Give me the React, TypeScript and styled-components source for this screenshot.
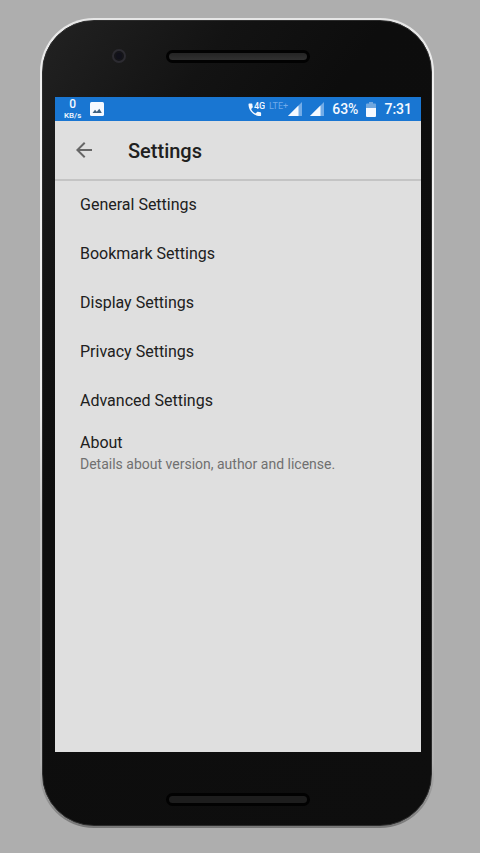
import React from "react";
import styled, { createGlobalStyle } from "styled-components";

const GlobalStyle = createGlobalStyle`
  *, *::before, *::after { box-sizing: border-box; }
  body {
    margin: 0;
    background: #aeaeae;
    font-family: Roboto, "Liberation Sans", sans-serif;
  }
`;

const Page = styled.div`
  min-height: 100vh;
  display: flex;
  padding: 18px 46px 25px 40px;
  background: #aeaeae;
`;

const PhoneEdge = styled.div`
  flex: 1;
  display: flex;
  padding: 2px;
  border-radius: 54px;
  background: linear-gradient(180deg, #e6e6e6 0%, #f2f2f2 12%, #ececec 48%, #c4c4c4 62%, #b4b4b4 92%, #777 100%);
`;

const Phone = styled.div`
  flex: 1;
  display: flex;
  flex-direction: column;
  padding: 0 11px;
  border: 1px solid #2c2c2c;
  border-radius: 52px;
  background: linear-gradient(125deg, #222 0%, #131313 20%, #0d0d0d 36%, #0e0e0e 100%);
`;

const Bezel = styled.div`
  display: grid;
  grid-template-columns: 1fr 144px 1fr;
  align-items: center;
  padding-left: 1px;
`;

const TopBezel = styled(Bezel)`
  height: 76px;
  padding-bottom: 6px;
`;

const BottomBezel = styled(Bezel)`
  height: 73px;
  padding-top: 21px;
`;

const Camera = styled.svg`
  display: block;
  margin-left: 56px;
`;

const Speaker = styled.div<{ $tone: string }>`
  grid-column: 2;
  height: 13px;
  border: 3px solid #020202;
  border-radius: 7px;
  background: ${(p) => p.$tone};
`;

const Screen = styled.main`
  flex: 1;
  margin: 0 -1px 0 1px;
  background: #dfdfdf;
  color: #202020;
`;

const StatusBar = styled.div`
  height: 24px;
  display: flex;
  align-items: center;
  justify-content: space-between;
  padding: 0 9px;
  background: #1976d2;
  color: #f5f9ff;
`;

const StatusGroup = styled.div<{ $gap: number }>`
  display: flex;
  align-items: center;
  gap: ${(p) => p.$gap}px;
  svg { display: block; flex: none; }
`;

const Speed = styled.div`
  display: flex;
  flex-direction: column;
  align-items: center;
  font-size: 8px;
  line-height: 10px;
  font-weight: 500;
`;

const SpeedValue = styled.span`
  font-size: 12px;
  line-height: 14px;
`;

const Network = styled.span`
  margin-top: -6px;
  font-size: 9px;
  line-height: 10px;
  color: #71abea;
`;

const StatusText = styled.span`
  font-size: 14px;
  line-height: 24px;
  font-weight: 500;
`;

const Header = styled.header`
  height: 60px;
  display: flex;
  align-items: center;
  gap: 32px;
  padding-left: 17px;
  border-bottom: 2px solid #c4c4c4;
`;

const BackButton = styled.button`
  display: flex;
  padding: 0;
  border: 0;
  background: none;
  color: #666;
  cursor: pointer;
`;

const Title = styled.h1`
  margin: 0;
  padding-top: 2px;
  font-size: 20px;
  line-height: 24px;
  font-weight: 500;
`;

const List = styled.nav`
  display: flex;
  flex-direction: column;
`;

const Row = styled.button`
  min-height: 49px;
  display: flex;
  flex-direction: column;
  justify-content: center;
  padding: 0 25px 2px;
  border: 0;
  background: none;
  color: inherit;
  font: inherit;
  font-size: 16px;
  line-height: 20px;
  text-align: left;
  cursor: pointer;
`;

const DetailRow = styled(Row)`
  padding-top: 7px;
`;

const Detail = styled.span`
  font-size: 14px;
  line-height: 22px;
  color: #707070;
`;

const sections = ["General Settings", "Bookmark Settings", "Display Settings", "Privacy Settings", "Advanced Settings"];

const ImageIcon = () => (
  <svg width="14" height="14" viewBox="0 0 14 14" aria-hidden="true">
    <rect width="14" height="14" rx="1.5" fill="#f5f9ff" />
    <path d="M2.5 11 5 7.7l1.8 2.1L9.3 6.8l2.5 4.2z" fill="#3e607f" />
  </svg>
);

const CallIcon = () => (
  <svg width="17" height="16" viewBox="0 0 17 16" role="img" aria-label="4G calling">
    <path
      d="M1.2 2.5h2.5c.4 0 .7.3.7.7 0 .9.1 1.7.4 2.5.1.3 0 .6-.2.8L3.1 8c1 2 2.500 3.500 4.500 4.500l1.500-1.500c.2-.2.5-.3.8-.2.8.3 1.6.4 2.500.4.4 0 .7.3.7.7v2.500c0 .4-.3.7-.7.7C6 15.1.5 9.700.5 3.200c0-.4.3-.7.7-.7z"
      fill="#f5f9ff"
    />
    <text x="6" y="8" fill="#f5f9ff" fontSize="9" fontWeight="500">4G</text>
  </svg>
);

const SignalIcon = () => (
  <svg width="14" height="14" viewBox="0 0 14 14" aria-hidden="true">
    <path d="M0 14 14 0v14z" fill="#73ace7" />
    <path d="M0 14 10.5 3.5V14z" fill="#f5f9ff" />
  </svg>
);

const BatteryIcon = () => (
  <svg width="10" height="15" viewBox="0 0 10 15" aria-hidden="true">
    <path d="M3 0h4v1.5h2q1 0 1 1V7H0V2.5q0-1 1-1h2z" fill="#70a7df" />
    <path d="M0 6h10v8q0 1-1 1H1q-1 0-1-1z" fill="#f5f9ff" />
  </svg>
);

export default function App() {
  return (
    <>
      <GlobalStyle />
      <Page>
        <PhoneEdge>
          <Phone>
            <TopBezel>
              <Camera width="16" height="16" viewBox="0 0 16 16" aria-hidden="true">
                <circle cx="8" cy="8" r="6" fill="#151519" stroke="#2c2b31" strokeWidth="2" />
                <circle cx="8" cy="8" r="3" fill="#11111b" />
              </Camera>
              <Speaker $tone="linear-gradient(#242424, #303030)" />
            </TopBezel>
            <Screen>
              <StatusBar>
                <StatusGroup $gap={9}>
                  <Speed>
                    <SpeedValue>0</SpeedValue>
                    <span>KB/s</span>
                  </Speed>
                  <ImageIcon />
                </StatusGroup>
                <StatusGroup $gap={8}>
                  <StatusGroup $gap={4}>
                    <CallIcon />
                    <StatusGroup $gap={0}>
                      <Network>LTE+</Network>
                      <SignalIcon />
                    </StatusGroup>
                  </StatusGroup>
                  <SignalIcon />
                  <StatusText>63%</StatusText>
                  <BatteryIcon />
                  <StatusText>7:31</StatusText>
                </StatusGroup>
              </StatusBar>
              <Header>
                <BackButton type="button" aria-label="Back">
                  <svg width="24" height="24" viewBox="0 0 24 24" aria-hidden="true">
                    <path d="M20 11H7.83l5.59-5.59L12 4l-8 8 8 8 1.41-1.41L7.83 13H20v-2z" fill="currentColor" />
                  </svg>
                </BackButton>
                <Title>Settings</Title>
              </Header>
              <List aria-label="Settings">
                {sections.map((name) => (
                  <Row type="button" key={name}>{name}</Row>
                ))}
                <DetailRow type="button">
                  About
                  <Detail>Details about version, author and license.</Detail>
                </DetailRow>
              </List>
            </Screen>
            <BottomBezel>
              <Speaker $tone="#1d1d1d" />
            </BottomBezel>
          </Phone>
        </PhoneEdge>
      </Page>
    </>
  );
}
